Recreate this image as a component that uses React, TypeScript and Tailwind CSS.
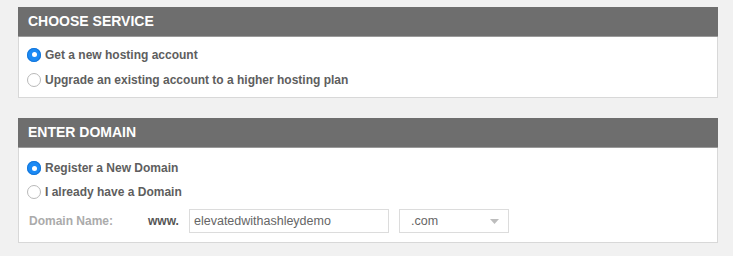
const font = { fontFamily: '"Liberation Sans", Arial, sans-serif' };

function Radio({ checked }: { checked?: boolean }) {
  if (checked) {
    return (
      <span className="flex h-[14px] w-[14px] items-center justify-center rounded-full bg-[#1b8af5] shadow-[inset_0_0_0_1px_#1677d9]">
        <span className="h-[5px] w-[5px] rounded-full bg-white" />
      </span>
    );
  }
  return <span className="block h-[14px] w-[14px] rounded-full border border-[#b9b9b9] bg-white" />;
}

function Option({ label, checked, h }: { label: string; checked?: boolean; h: string }) {
  return (
    <div className={`flex items-center gap-[4px] ${h}`}>
      <Radio checked={checked} />
      <span className="text-[12px] font-bold text-[#5e5e5e]">{label}</span>
    </div>
  );
}

function Panel({ title, children }: { title: string; children: React.ReactNode }) {
  return (
    <div>
      <div className="flex h-[30px] items-center border-b border-[#9a9a9a] bg-[#6e6e6e] px-[10px]">
        <h2 className="text-[14px] font-bold text-white">{title}</h2>
      </div>
      <div className="border-x border-b border-[#d8d8d8] bg-white px-[8px]">{children}</div>
    </div>
  );
}

export default function App() {
  return (
    <div style={font} className="h-[256px] w-[733px] bg-[#f1f1f1] pl-[18px] pr-[15px] pt-[7px]">
      <Panel title="CHOOSE SERVICE">
        <div className="pb-[5px] pt-[5px]">
          <Option h="h-[25px]" checked label="Get a new hosting account" />
          <Option h="h-[25px]" label="Upgrade an existing account to a higher hosting plan" />
        </div>
      </Panel>

      <div className="mt-[20px]">
        <Panel title="ENTER DOMAIN">
          <div className="pb-[9px] pt-[8px]">
            <Option h="h-[24px]" checked label="Register a New Domain" />
            <Option h="h-[24px]" label="I already have a Domain" />
            <div className="mt-[5px] flex items-center">
              <span className="w-[121px] pl-[2px] text-[12px] font-bold text-[#ababab]">Domain Name:</span>
              <span className="w-[41px] text-[12px] font-bold text-[#555]">www.</span>
              <div className="flex h-[24px] w-[200px] items-center border border-[#dcdcdc] bg-white px-[4px] text-[12.5px] text-[#666]">
                elevatedwithashleydemo
              </div>
              <div className="ml-[10px] flex h-[24px] w-[110px] items-center justify-between border border-[#dcdcdc] bg-white pl-[11px] pr-[9px] text-[12.5px] text-[#666]">
                <span>.com</span>
                <svg width="9" height="5" viewBox="0 0 9 5">
                  <path d="M0 0h9L4.5 5z" fill="#bdbdbd" />
                </svg>
              </div>
            </div>
          </div>
        </Panel>
      </div>
    </div>
  );
}
